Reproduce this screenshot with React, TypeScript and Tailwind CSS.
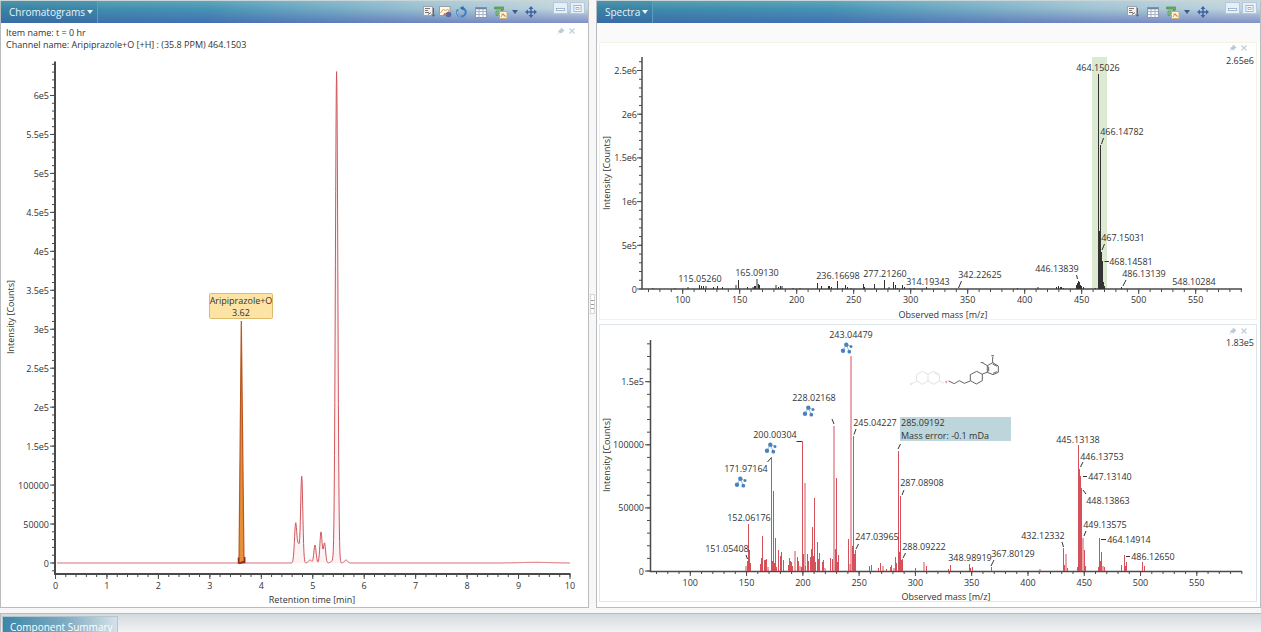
import { ReactNode } from "react";

type Label = { text: string; x: number; y: number };
type Stick = [x: number, height: number];
type Segment = [x1: number, y1: number, x2: number, y2: number];

const INK = "#4a4a4a";

function range(from: number, to: number, step: number) {
  const out: number[] = [];
  for (let v = from; v <= to + step / 1000; v += step) out.push(v);
  return out;
}

/* ---------- icons ---------- */

function ExportIcon() {
  return (
    <svg viewBox="0 0 12 12" className="h-3 w-3">
      <rect x="0.5" y="0.5" width="9" height="9" fill="#f2f2ee" stroke="#a3a3a8" />
      <path d="M2 2.500h5M2 4.500h3M2 6.500h4" stroke="#777" />
      <path d="M10.500 2v8M8.500 8l2 2.500 1.500-2M5 8.500l3-2" stroke="#66686f" fill="none" />
    </svg>
  );
}

function PictureIcon() {
  return (
    <svg viewBox="0 0 13 12" className="h-3 w-[13px]">
      <rect x="0.5" y="0.5" width="10.500" height="9" fill="#fbf8ee" stroke="#a09fa8" />
      <path d="M1.500 7l3-4 2 2 2-2 2 3" stroke="#e0a050" fill="none" />
      <circle cx="9.500" cy="8.500" r="2.800" fill="#5d6aa3" />
      <circle cx="6" cy="8.500" r="1.500" fill="#c07a60" />
    </svg>
  );
}

function RefreshIcon() {
  return (
    <svg viewBox="0 0 12 12" className="h-3 w-3">
      <path d="M3 3.500A4.300 4.300 0 1 0 7.500 2" stroke="#3e7fc0" strokeWidth="2" fill="none" />
      <path d="M2.500 5.200A4 4 0 0 0 6 10.300" stroke="#a8d0ee" fill="none" />
      <path d="M8.500 0v4.500L4.500 2z" fill="#3568a8" />
    </svg>
  );
}

function TableIcon() {
  return (
    <svg viewBox="0 0 12 11" className="h-[11px] w-3">
      <rect x="0.5" y="0.500" width="11" height="10" fill="#f5f7fa" stroke="#8795aa" />
      <path d="M1 1.500h10" stroke="#6b83a5" strokeWidth="1.500" />
      <path d="M1 4.500h10M1 7.500h10M4 2v8.500M8 2v8.500" stroke="#9ba6b8" strokeWidth="0.800" />
    </svg>
  );
}

function LayersIcon() {
  return (
    <svg viewBox="0 0 14 13" className="h-[13px] w-3.5">
      <path d="M0.500 1h9v3l-2 1v-2h-7z" fill="#6fae5c" stroke="#4f8e48" strokeWidth="0.700" />
      <path d="M2 5h7v2h-5v2.500h-2z" fill="#8cc076" stroke="#4f8e48" strokeWidth="0.600" />
      <rect x="5.500" y="5.500" width="7.500" height="7" fill="#fdf4dc" stroke="#c8ab7a" />
      <path d="M7 11l2-3.500 2.500 3.500M7.500 8l4 2" stroke="#d9743d" strokeWidth="0.800" fill="none" />
    </svg>
  );
}

function MoveIcon() {
  return (
    <svg viewBox="0 0 12 12" className="h-3 w-3">
      <path d="M6 1.500v9M1.500 6h9" stroke="#3f62a8" strokeWidth="1.500" />
      <path d="M6 0l2.500 3h-5zM6 12l2.500-3h-5zM0 6l3-2.500v5zM12 6l-3-2.500v5z" fill="#3f62a8" />
    </svg>
  );
}

function Caret() {
  return (
    <svg viewBox="0 0 6 4" className="h-1 w-1.5">
      <path d="M0 0h6L3 4z" fill="currentColor" />
    </svg>
  );
}

function PinIcon() {
  return (
    <svg viewBox="0 0 8 8" className="h-2 w-2">
      <path d="M4 0.500l3.500 3-1 1-0.500 0-1.500 2-2-1L1 7.500 0.500 7 2 5.500l-1-1.500 2.500-1.500z" fill="#b9cbd9" />
    </svg>
  );
}

function CloseIcon() {
  return (
    <svg viewBox="0 0 8 8" className="h-2 w-2">
      <path d="M1.500 1.500l5 5M6.500 1.500l-5 5" stroke="#c2d0dc" strokeWidth="1.300" />
    </svg>
  );
}

/* ---------- panel chrome ---------- */

function IconButton(props: { label: string; className?: string; children: ReactNode }) {
  return (
    <button
      type="button"
      aria-label={props.label}
      className={`flex items-center justify-center ${props.className ?? ""}`}
    >
      {props.children}
    </button>
  );
}

function WindowButtons() {
  return (
    <div className="ml-3 flex gap-0.5 self-start pt-px">
      <IconButton label="Minimize" className="h-3 w-[15px] border border-[#b4c7dd] bg-[#e6eef6]">
        <svg viewBox="0 0 9 7" className="h-[7px] w-[9px]">
          <rect x="0.5" y="3.500" width="8" height="2" fill="#fff" stroke="#8ba7c4" strokeWidth="0.800" />
        </svg>
      </IconButton>
      <IconButton label="Maximize" className="h-3 w-[15px] border border-[#b4c7dd] bg-[#e6eef6]">
        <svg viewBox="0 0 9 7" className="h-[7px] w-[9px]">
          <rect x="1" y="0.500" width="7" height="6" fill="#fff" stroke="#8ba7c4" strokeWidth="0.800" />
          <rect x="3" y="2.500" width="3" height="2" fill="none" stroke="#8ba7c4" strokeWidth="0.800" />
        </svg>
      </IconButton>
    </div>
  );
}

function PanelHeader(props: { title: string; full?: boolean }) {
  return (
    <header className="flex h-[22px] items-center bg-[linear-gradient(to_bottom,rgba(255,255,255,0.15)_0%,rgba(255,255,255,0)_35%,rgba(65,75,175,0.5)_100%),linear-gradient(to_right,#3a8ba6_0%,#4594b4_35%,#a0c3d2_75%,#c3d6de_100%)]">
      <button
        type="button"
        className="flex h-full items-center gap-0.5 border-r border-[#5b9dbd] bg-[#2f6f98]/20 pl-2 pr-1 text-[10px] text-[#e8f3f8]"
      >
        {props.title}
        <Caret />
      </button>
      <div className="ml-auto flex h-full items-center pr-[3px]">
        <IconButton label="Export" className="w-4">
          <ExportIcon />
        </IconButton>
        {props.full && (
          <>
            <IconButton label="Copy picture" className="w-4">
              <PictureIcon />
            </IconButton>
            <IconButton label="Refresh" className="w-4">
              <RefreshIcon />
            </IconButton>
          </>
        )}
        <IconButton label="Table" className="w-6">
          <TableIcon />
        </IconButton>
        <IconButton label="Layers" className="w-4">
          <LayersIcon />
        </IconButton>
        <IconButton label="More" className="w-3 text-[#3d5a8c]">
          <Caret />
        </IconButton>
        <IconButton label="Move" className="w-5">
          <MoveIcon />
        </IconButton>
        <WindowButtons />
      </div>
    </header>
  );
}

function PinAndClose() {
  return (
    <div className="flex gap-[3px]">
      <IconButton label="Pin">
        <PinIcon />
      </IconButton>
      <IconButton label="Close">
        <CloseIcon />
      </IconButton>
    </div>
  );
}

/* ---------- chart parts ---------- */

function XTicks(props: { at: number[]; y: number; length: number; scale: (v: number) => number }) {
  return (
    <path
      d={props.at.map((v) => `M${props.scale(v)} ${props.y}v${props.length}`).join("")}
      stroke={INK}
    />
  );
}

function YTicks(props: { at: number[]; x: number; length: number; scale: (v: number) => number }) {
  return (
    <path
      d={props.at.map((v) => `M${props.x} ${props.scale(v)}h-${props.length}`).join("")}
      stroke={INK}
    />
  );
}

function Sticks(props: { data: Stick[]; base: number; color: string }) {
  return (
    <path
      d={props.data.map(([x, h]) => `M${x} ${props.base}v-${h}`).join("")}
      stroke={props.color}
      strokeWidth="1"
    />
  );
}

function Leaders(props: { data: Segment[] }) {
  return (
    <path
      d={props.data.map(([a, b, c, d]) => `M${a} ${b}L${c} ${d}`).join("")}
      stroke="#333"
    />
  );
}

function Labels(props: { data: Label[] }) {
  return (
    <g textAnchor="middle">
      {props.data.map((l) => (
        <text key={l.text} x={l.x} y={l.y}>
          {l.text}
        </text>
      ))}
    </g>
  );
}

/* ---------- chromatogram ---------- */

const chromPeaks = [
  { x: 295.7, h: 40, w: 1.2 },
  { x: 298.5, h: 16, w: 1 },
  { x: 301.7, h: 87, w: 1.1 },
  { x: 310, h: 3, w: 1.5 },
  { x: 315, h: 18, w: 1.1 },
  { x: 321, h: 31, w: 1.1 },
  { x: 324.5, h: 20, w: 1.1 },
  { x: 333, h: 2, w: 2 },
  { x: 336.6, h: 491, w: 1.2 },
  { x: 346, h: 3, w: 1.5 },
  { x: 535, h: 0.7, w: 14 },
];

function chromTrace() {
  const points = range(57, 570, 0.3).map((x) => {
    const sum = chromPeaks.reduce(
      (acc, p) => acc + p.h * Math.exp(-((x - p.x) ** 2) / (2 * p.w ** 2)),
      0
    );
    return `${x.toFixed(1)},${(563 - sum).toFixed(1)}`;
  });
  return points.join(" ");
}

const chromY = [
  "0", "50000", "100000", "1.5e5", "2e5", "2.5e5", "3e5",
  "3.5e5", "4e5", "4.5e5", "5e5", "5.5e5", "6e5",
];

function Chromatogram() {
  const sx = (v: number) => 55.5 + v * 51.45;
  const sy = (v: number) => 563 - v * 38.96;
  return (
    <svg
      viewBox="1 52 587 554"
      className="block w-full overflow-visible fill-[#333] text-[9px]"
      role="img"
      aria-label="Chromatogram"
    >
      <path d="M55 61.500V574H570.500" stroke={INK} strokeWidth="2" fill="none" />
      <XTicks at={range(0, 10, 0.2)} y={574} length={3} scale={sx} />
      <XTicks at={range(0, 10, 1)} y={574} length={5} scale={sx} />
      <YTicks at={range(-0.2, 12.8, 0.2)} x={55} length={3} scale={sy} />
      <YTicks at={range(0, 12, 1)} x={55} length={5} scale={sy} />
      <g textAnchor="end">
        {chromY.map((t, i) => (
          <text key={t} x="49" y={sy(i) + 3.5}>
            {t}
          </text>
        ))}
      </g>
      <g textAnchor="middle">
        {range(0, 10, 1).map((v) => (
          <text key={v} x={sx(v)} y="589">
            {v}
          </text>
        ))}
        <text x="312" y="603">Retention time [min]</text>
        <text transform="translate(14 317) rotate(-90)">Intensity [Counts]</text>
      </g>
      <polyline points={chromTrace()} fill="#fdf3f4" stroke="#d0565c" />
      <path d="M239 563L241.300 321L244 563z" fill="#e58f3a" stroke="#b9571f" strokeWidth="1.200" />
      <path d="M238.500 557.500v6M239 563.500l5-2M244.700 557v6" stroke="#8e2a1c" strokeWidth="1.500" />
      <rect x="209.500" y="293.500" width="63" height="25" rx="1" fill="#fde4a4" stroke="#dcbc6c" />
      <g textAnchor="middle">
        <text x="241" y="304">Aripiprazole+O</text>
        <text x="241" y="316">3.62</text>
      </g>
    </svg>
  );
}

/* ---------- precursor spectrum ---------- */

const precursorSticks: Stick[] = [
  [653, 1], [675, 1], [688, 2], [699.5, 4], [701.5, 3], [703.5, 3], [706, 3],
  [713.5, 2], [717.5, 3], [722.5, 2], [736, 4], [738.5, 9], [747.5, 2], [753, 2],
  [754.5, 3], [755.5, 3], [757, 10], [758.5, 5], [759.5, 4], [776, 4], [778.5, 2],
  [780.5, 3], [782, 3], [793, 1], [800, 1], [817.5, 6], [821.5, 3], [828.5, 3],
  [829.5, 3], [831.5, 2], [837.5, 8], [842.5, 1], [845.5, 4], [847.5, 2], [851, 1],
  [863.5, 5], [864.5, 2], [874.5, 5], [884.5, 9], [889, 2], [893.5, 7], [895.5, 4],
  [897.5, 1], [902.5, 4], [904.5, 2], [910, 1], [914, 1], [926.5, 2], [1017.5, 1],
  [1038, 2], [1056.5, 2], [1058.5, 3], [1060.5, 2], [1061.5, 2], [1063.5, 1],
  [1076.5, 4], [1077.5, 6], [1078.5, 8], [1079.5, 7], [1080.5, 4], [1081.5, 3],
  [1083.5, 2], [1095.5, 1], [1098.5, 215], [1099.5, 58], [1100.5, 144],
  [1101.5, 37], [1102.5, 28], [1103.5, 7], [1104.5, 3], [1121.5, 2],
];

const precursorLabels: Label[] = [
  { text: "115.05260", x: 700, y: 282 },
  { text: "165.09130", x: 757, y: 276 },
  { text: "236.16698", x: 838, y: 279 },
  { text: "277.21260", x: 885, y: 277 },
  { text: "314.19343", x: 928, y: 285 },
  { text: "342.22625", x: 980, y: 278 },
  { text: "464.15026", x: 1098, y: 71 },
  { text: "466.14782", x: 1122, y: 135 },
  { text: "467.15031", x: 1123, y: 241 },
  { text: "468.14581", x: 1131, y: 265 },
  { text: "446.13839", x: 1057, y: 272 },
  { text: "486.13139", x: 1144, y: 277 },
  { text: "548.10284", x: 1194, y: 285 },
];

const precursorLeaders: Segment[] = [
  [958.5, 288, 961.5, 281],
  [1101.5, 144, 1103.5, 138],
  [1102, 250, 1104.5, 244],
  [1104.5, 261.5, 1109, 261.5],
  [1076.5, 275, 1077.5, 279],
  [1123, 286, 1126, 280],
];

const massTicks = range(100, 550, 50);

function PrecursorSpectrum() {
  const sx = (v: number) => 682.7 + (v - 100) * 1.14;
  const sy = (v: number) => 289 - v * 8.74;
  const yLabels = ["0", "5e5", "1e6", "1.5e6", "2e6", "2.5e6"];
  return (
    <svg
      viewBox="600 43 656 276"
      className="block w-full overflow-visible fill-[#333] text-[9px]"
      role="img"
      aria-label="Precursor spectrum"
    >
      <rect x="1092" y="57" width="15" height="232" fill="#dbead0" />
      <path d="M642 57V289H1242" stroke={INK} strokeWidth="1.500" fill="none" />
      <XTicks at={range(70, 590, 10)} y={289} length={3} scale={sx} />
      <XTicks at={massTicks} y={289} length={5} scale={sx} />
      <YTicks at={range(0, 26, 1)} x={642} length={3} scale={sy} />
      <YTicks at={range(0, 25, 5)} x={642} length={5} scale={sy} />
      <g textAnchor="end">
        {yLabels.map((t, i) => (
          <text key={t} x="637" y={sy(i * 5) + 3.5}>
            {t}
          </text>
        ))}
        <text x="1254" y="64">2.65e6</text>
      </g>
      <g textAnchor="middle">
        {massTicks.map((v) => (
          <text key={v} x={sx(v)} y="303">
            {v}
          </text>
        ))}
        <text x="943" y="318">Observed mass [m/z]</text>
        <text transform="translate(610 173) rotate(-90)">Intensity [Counts]</text>
      </g>
      <Sticks data={precursorSticks} base={289} color="#333" />
      <Leaders data={precursorLeaders} />
      <Labels data={precursorLabels} />
    </svg>
  );
}

/* ---------- fragment spectrum ---------- */

const fragmentSticks: Stick[] = [
  [746, 5], [747.5, 10], [748.5, 47], [749.5, 21], [750.5, 8], [760.5, 7],
  [761.5, 13], [762.5, 35], [764.5, 11], [765.5, 11], [766.5, 12], [768, 4],
  [771.5, 114], [772.5, 10], [773.5, 80], [774.5, 8], [775.5, 33], [776.5, 4],
  [778.5, 21], [780.5, 15], [781.5, 19], [783.5, 11], [788.5, 6], [789.5, 13],
  [790.5, 10], [791.5, 9], [792.5, 5], [795, 20], [797.5, 14], [798.5, 10],
  [800, 5], [801.5, 4], [802.5, 129], [803.5, 17], [805, 88], [805.5, 5],
  [807.5, 17], [808.5, 10], [810.5, 14], [811.5, 22], [812.5, 44], [813.5, 15],
  [814.5, 73], [815.5, 9], [817.5, 29], [818.5, 12], [819.5, 18], [822.5, 9],
  [823.5, 11], [825, 3], [830.5, 13], [832.5, 12], [834, 145], [835.5, 22],
  [836.5, 93], [837.5, 9], [838.5, 16], [848.5, 32], [850, 7], [851, 215],
  [852.5, 25], [853.5, 135], [854.5, 17], [855.5, 21], [869.5, 5], [871.5, 6],
  [878.5, 3], [880.5, 8], [883, 5], [886.5, 2], [890.5, 4], [891.5, 6], [894, 3],
  [895.5, 14], [896.5, 8], [898.5, 120], [899.5, 19], [900.5, 75], [901.5, 11],
  [902.5, 12], [915.5, 3], [924, 9], [926.5, 5], [948.5, 2], [950.5, 6],
  [969.5, 7], [970.5, 3], [972.5, 4], [991.5, 4], [1040, 2], [1063.5, 23], [1064.5, 6],
  [1066, 17], [1067.5, 3], [1077.5, 4], [1078.5, 126], [1079.5, 102],
  [1080.5, 95], [1081.5, 83], [1083, 33], [1084.5, 21], [1085.5, 5],
  [1098.5, 4], [1099.5, 33], [1100.5, 10], [1101.5, 19], [1103, 5], [1104.5, 4],
  [1121.5, 6], [1124.5, 16], [1125.5, 5], [1126.5, 9], [1142.5, 9], [1144.5, 5],
];

const fragmentLabels: Label[] = [
  { text: "243.04479", x: 851, y: 338 },
  { text: "228.02168", x: 814, y: 401 },
  { text: "200.00304", x: 775, y: 438 },
  { text: "171.97164", x: 746, y: 472 },
  { text: "152.06176", x: 749, y: 521 },
  { text: "151.05408", x: 727, y: 552 },
  { text: "245.04227", x: 875, y: 426 },
  { text: "247.03965", x: 877, y: 540 },
  { text: "287.08908", x: 922, y: 486 },
  { text: "288.09222", x: 924, y: 550 },
  { text: "348.98919", x: 970, y: 561 },
  { text: "367.80129", x: 1013, y: 557 },
  { text: "432.12332", x: 1043, y: 539 },
  { text: "445.13138", x: 1078, y: 443 },
  { text: "446.13753", x: 1102, y: 460 },
  { text: "447.13140", x: 1110, y: 480 },
  { text: "448.13863", x: 1108, y: 504 },
  { text: "449.13575", x: 1105, y: 528 },
  { text: "464.14914", x: 1129, y: 543 },
  { text: "486.12650", x: 1153, y: 560 },
];

const fragmentLeaders: Segment[] = [
  [746, 555, 747.5, 559],
  [767.5, 462, 771, 458],
  [796.5, 441.5, 802.5, 441.5],
  [832, 419, 834, 424],
  [854, 434.5, 856, 429],
  [856, 549, 858.5, 544],
  [898, 449, 900.5, 444],
  [902, 495, 904, 490],
  [903, 558, 905.5, 553],
  [991, 566, 994, 560],
  [1062, 542, 1063.5, 547],
  [1080.5, 467, 1083, 462],
  [1083, 476.5, 1087, 476.5],
  [1083, 490, 1086, 494],
  [1084, 536, 1086, 531],
  [1101, 539.5, 1106, 539.5],
  [1126, 556.5, 1130, 556.5],
];

const fragmentMarks = [
  [847, 348],
  [809, 411],
  [771, 448],
  [741, 482],
];

function FragmentMark(props: { x: number; y: number }) {
  return (
    <g transform={`translate(${props.x} ${props.y})`} fill="#4a82bd">
      <path d="M-4 2.700L-0.700-3.300L2.300 3.700M-0.700-3.300L4-1.500" stroke="#9cc0e2" fill="none" />
      <circle cx="-0.700" cy="-3.300" r="2.200" />
      <circle cx="4" cy="-1.500" r="1.500" />
      <circle cx="-4" cy="2.700" r="2.200" />
      <circle cx="2.300" cy="3.700" r="1.900" />
    </g>
  );
}

function Molecule() {
  return (
    <g transform="translate(860 320) scale(0.3333)" fill="none" strokeWidth="2.500">
      <g stroke="#dcdcdc">
        <path d="M187 154l17 9v20l-17 10-17-10v-20zM204 163l17-9 17 9v20l-17 10-17-10" />
        <path d="M170 183l-16 9M223 159l11 6M238 183l14 7" />
        <path d="M150 192h7" strokeWidth="4" />
      </g>
      <path d="M255 184l6 5M261 182l-3 8" stroke="#d58a94" />
      <g stroke="#444">
        <path d="M266 183l17 8 15-9 15 8 18-7" />
        <path d="M350 154l17 9v19l-18 10-18-10v-18z" />
        <path d="M367 162l15-5M382 157v-20l16-9 17 10v19l-16 7z" />
        <path d="M386 154v-14M398 132l13 7M399 160l12-5" />
        <path d="M382 137l-13-8M398 128v-18M394 107l8 0M362 128l8 0" />
      </g>
    </g>
  );
}

function FragmentSpectrum() {
  const sx = (v: number) => 690.3 + (v - 100) * 1.1256;
  const sy = (v: number) => 571 - v * 12.62;
  const yLabels = ["0", "50000", "100000", "1.5e5"];
  return (
    <svg
      viewBox="600 325 656 276"
      className="block w-full overflow-visible fill-[#333] text-[9px]"
      role="img"
      aria-label="Fragment spectrum"
    >
      <path d="M650.500 340V571.500H1242" stroke={INK} strokeWidth="1.500" fill="none" />
      <XTicks at={range(70, 590, 10)} y={571} length={3} scale={sx} />
      <XTicks at={massTicks} y={571} length={5} scale={sx} />
      <YTicks at={range(0, 18, 1)} x={650} length={3} scale={sy} />
      <YTicks at={range(0, 15, 5)} x={650} length={5} scale={sy} />
      <g textAnchor="end">
        {yLabels.map((t, i) => (
          <text key={t} x="644" y={sy(i * 5) + 3.5}>
            {t}
          </text>
        ))}
        <text x="1254" y="346">1.83e5</text>
      </g>
      <g textAnchor="middle">
        {massTicks.map((v) => (
          <text key={v} x={sx(v)} y="586">
            {v}
          </text>
        ))}
        <text x="946" y="600">Observed mass [m/z]</text>
        <text transform="translate(610 455) rotate(-90)">Intensity [Counts]</text>
      </g>
      <Sticks data={fragmentSticks} base={571} color="#d4505a" />
      <Leaders data={fragmentLeaders} />
      {fragmentMarks.map(([x, y]) => (
        <FragmentMark key={x} x={x} y={y} />
      ))}
      <Molecule />
      <rect x="900" y="417" width="111" height="24" fill="#bdd6db" />
      <text x="901" y="426">285.09192</text>
      <text x="901" y="439">Mass error: -0.1 mDa</text>
      <Labels data={fragmentLabels} />
    </svg>
  );
}

/* ---------- page ---------- */

export default function App() {
  return (
    <main className="bg-[#f7f7f7] font-['Open_Sans','Noto_Sans',sans-serif] text-[#333]">
      <div className="grid grid-cols-[589fr_7px_665fr]">
        <section className="border border-t-2 border-[#b9bcbf] border-t-[#c9d6d8] bg-white pb-px">
          <div className="-mt-px">
            <PanelHeader title="Chromatograms" full />
          </div>
          <div className="flex h-[29px] items-start justify-between pl-[5px] pr-3 pt-1 text-[9px] leading-3">
            <div>
              <p>Item name: t = 0 hr</p>
              <p>Channel name: Aripiprazole+O [+H] : (35.8 PPM) 464.1503</p>
            </div>
            <PinAndClose />
          </div>
          <Chromatogram />
        </section>

        <div className="flex items-center justify-center">
          <div className="flex h-5 w-[5px] flex-col items-center justify-center gap-[3px] border border-[#d5d5d5] bg-white">
            <span className="h-px w-[3px] bg-[#999]" />
            <span className="h-px w-[3px] bg-[#999]" />
            <span className="h-px w-[3px] bg-[#999]" />
          </div>
        </div>

        <section className="border border-t-2 border-[#b9bcbf] border-t-[#c9d6d8] bg-white">
          <div className="-mt-px">
            <PanelHeader title="Spectra" />
          </div>
          <div className="h-[19px] bg-[#fafafa]" />
          <div className="flex flex-col gap-1 pl-0.5 pr-[3px]">
            <div className="relative border border-[#f5f4e4]">
              <div className="absolute right-2 top-px">
                <PinAndClose />
              </div>
              <PrecursorSpectrum />
            </div>
            <div className="relative border border-[#dde6ea]">
              <div className="absolute right-2 top-0.5">
                <PinAndClose />
              </div>
              <FragmentSpectrum />
            </div>
          </div>
        </section>
      </div>

      <section className="mt-[5px] flex h-5 overflow-hidden border-l border-t border-[#b9bcbf] bg-[linear-gradient(to_bottom,#d3dade,#f2f4f5)] pl-px pt-0.5">
        <button
          type="button"
          className="flex h-6 items-start border border-[#b5c5cc] bg-[linear-gradient(to_right,#3d86a8,#7fabc2_55%,#d5e1e7)] pl-[7px] pr-1 pt-0.5 text-[10px] leading-4 text-white"
        >
          Component Summary
        </button>
      </section>
    </main>
  );
}
